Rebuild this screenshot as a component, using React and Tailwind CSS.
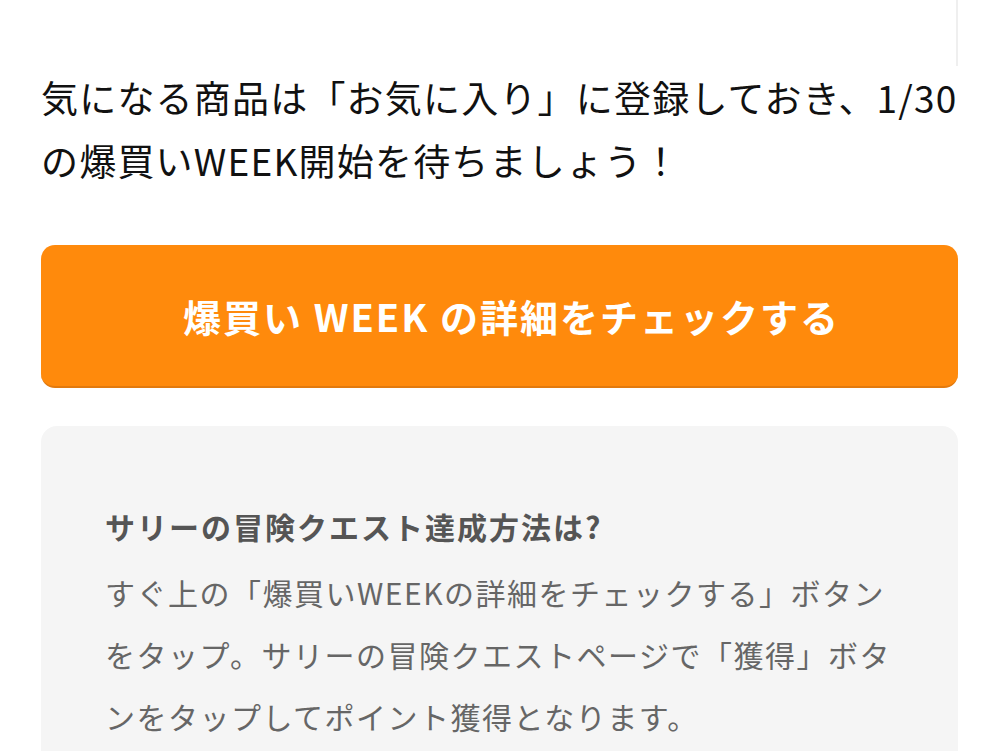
import React from 'react';

export default function App() {
	return (
		<div
			className="min-h-screen bg-white px-[41px] pb-10"
			style={{ fontFamily: '"Noto Sans CJK JP", "Noto Sans", sans-serif' }}
		>
			{/* tail of the card above */}
			<div className="h-[66px] border-r-2 border-[#efefef]" />

			<p className="text-[37px] leading-[63px] text-[#111] tracking-[1.2px] whitespace-nowrap">
				気になる商品は「お気に入り」に登録しておき、1/30
				<br />
				の爆買いWEEK開始を待ちましょう！
			</p>

			<button className="mt-[53px] w-full h-[143px] rounded-[14px] bg-[#ff8a0c] border-b-2 border-[#e27a0e] text-white text-[38px] font-bold tracking-[2px] pl-6 flex items-center justify-center">
				爆買い WEEK の詳細をチェックする
			</button>

			<div className="mt-[38px] rounded-[16px] bg-[#f5f5f5] pt-[80px] pb-16 pl-[64px] pr-[40px]">
				<h3 className="text-[30px] leading-[40px] font-bold text-[#555] tracking-[2px]">
					サリーの冒険クエスト達成方法は?
				</h3>
				<p className="mt-[15px] text-[30px] leading-[62px] text-[#666] tracking-[1.5px] whitespace-nowrap">
					すぐ上の「爆買いWEEKの詳細をチェックする」ボタン
					<br />
					をタップ。サリーの冒険クエストページで「獲得」ボタ
					<br />
					ンをタップしてポイント獲得となります。
				</p>
			</div>
		</div>
	);
}
